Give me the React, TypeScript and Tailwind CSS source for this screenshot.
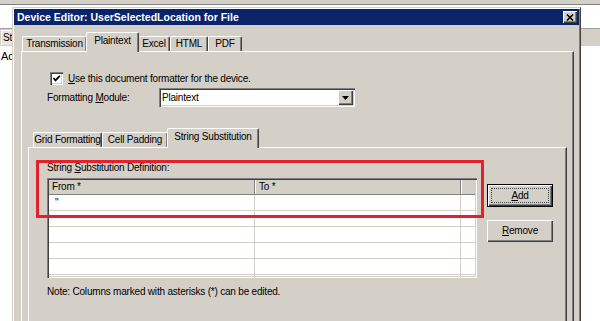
import React from "react";

const raised =
  "shadow-[inset_1px_1px_#ffffff,inset_-1px_-1px_#404040,inset_-2px_-2px_#808080]";
const sunken =
  "shadow-[inset_1px_1px_#808080,inset_2px_2px_#404040,inset_-1px_-1px_#ffffff,inset_-2px_-2px_#d4d0c8]";

function Tab({
  label,
  w,
  active,
}: {
  label: React.ReactNode;
  w: string;
  active?: boolean;
}) {
  return (
    <div
      className={`${w} ${
        active ? "h-[20px] -mx-[1px] z-10" : "h-[15px] mb-[1px]"
      } flex items-center justify-center bg-[#d4d0c8] border-t border-l border-white border-r border-r-[#404040] rounded-t-[2px] shadow-[inset_-1px_0_#808080] whitespace-nowrap`}
    >
      <span className={active ? "-mt-[3px]" : ""}>{label}</span>
    </div>
  );
}

function U({ children }: { children: React.ReactNode }) {
  return <span className="underline underline-offset-[1px]">{children}</span>;
}

export default function App() {
  const rows = [0, 1, 2, 3, 4, 5];

  return (
    <div className="relative w-[600px] h-[321px] overflow-hidden bg-white font-['Liberation_Sans',Arial,sans-serif] text-[10px] leading-[12px] tracking-[-0.2px] text-black">
      {/* application window behind the dialog */}
      <div className="h-[5px] bg-[#d4d0c8] border-b border-[#808080]" />
      <div className="h-[23px] bg-white" />
      <div className="h-[18px] bg-[#d4d0c8] border-t border-[#a0a0a0] flex items-center">
        <div className="ml-[1px] h-[15px] px-[1px] bg-[#e8e6e0] border-l border-t border-white flex items-center">
          Status
        </div>
      </div>
      <div className="pl-[1px] pt-[4px] text-[11px]">Address</div>

      {/* dialog */}
      <div className="absolute left-[12px] top-[7px] w-[569px] h-[330px] flex flex-col bg-[#d4d0c8] border border-[#d4d0c8] border-r-[#404040] border-b-[#404040] shadow-[inset_1px_1px_#ffffff,inset_-1px_-1px_#808080] p-[1px]">
        <div className="h-[16px] flex items-center justify-between bg-[#0a246a] pl-[3px] pr-[2px]">
          <span className="text-white font-bold text-[10.5px] tracking-[0px]">
            Device Editor: UserSelectedLocation for File
          </span>
          <div
            className={`w-[14px] h-[12px] bg-[#d4d0c8] ${raised} flex items-center justify-center`}
          >
            <svg width="8" height="7" viewBox="0 0 8 7">
              <path d="M1 0.5 L7 6.5 M7 0.5 L1 6.5" stroke="#000" strokeWidth="1.6" />
            </svg>
          </div>
        </div>

        <div className="flex-1 flex flex-col pl-[7px] pr-[5px]">
          {/* main tabs */}
          <div className="relative z-10 mt-[7px] h-[20px] flex items-end pl-[1px] -mb-[1px]">
            <Tab label="Transmission" w="w-[65px]" />
            <Tab label="Plaintext" w="w-[53px]" active />
            <Tab label="Excel" w="w-[32px]" />
            <Tab label="HTML" w="w-[38px]" />
            <Tab label="PDF" w="w-[34px]" />
          </div>

          <div className="flex-1 flex flex-col border-l border-t border-white border-r border-r-[#404040] shadow-[inset_-1px_0_#808080] pl-[6px] pr-[6px] pt-[20px]">
            <div className="ml-[22px] flex items-center h-[13px] gap-[5px]">
              <div className={`w-[13px] h-[13px] bg-white ${sunken} flex items-center justify-center`}>
                <svg width="9" height="9" viewBox="0 0 9 9">
                  <path d="M1.5 4 L3.5 6.3 L7.8 1.8" stroke="#000" strokeWidth="1.8" fill="none" />
                </svg>
              </div>
              <span>
                <U>U</U>se this document formatter for the device.
              </span>
            </div>

            <div className="ml-[19px] mt-[3px] flex items-center">
              <span className="w-[112px]">
                Formatting <U>M</U>odule:
              </span>
              <div className={`w-[196px] h-[19px] bg-white ${sunken} flex items-center pl-[3px] pr-[2px]`}>
                <span className="flex-1">Plaintext</span>
                <div className={`w-[15px] h-[15px] bg-[#d4d0c8] ${raised} flex items-center justify-center`}>
                  <svg width="7" height="4" viewBox="0 0 7 4">
                    <path d="M0 0 H7 L3.5 4 Z" fill="#000" />
                  </svg>
                </div>
              </div>
            </div>

            {/* inner tabs */}
            <div className="relative z-10 mt-[21px] h-[20px] flex items-end pl-[5px] -mb-[1px]">
              <Tab label="Grid Formatting" w="w-[69px]" />
              <Tab label="Cell Padding" w="w-[66px]" />
              <Tab label="String Substitution" w="w-[92px]" active />
            </div>

            <div className="relative flex-1 border-l border-t border-white border-r border-r-[#404040] shadow-[inset_-1px_0_#808080] pl-[18px] pt-[14px]">
              <div className="h-[12px]">
                String <U>S</U>ubstitution Definition:
              </div>

              <div className="mt-[4px] flex items-start">
                <div className={`w-[430px] h-[100px] bg-white ${sunken} p-[2px] overflow-hidden`}>
                  <div className="h-[15px] flex bg-[#d4d0c8] border-b border-[#808080]">
                    <div className="w-[206px] pl-[3px] flex items-center border-r border-[#808080]">
                      From *
                    </div>
                    <div className="w-[206px] pl-[3px] flex items-center border-l border-white border-r border-r-[#808080]">
                      To *
                    </div>
                    <div className="flex-1 border-l border-white" />
                  </div>
                  {rows.map((r) => (
                    <div key={r} className="h-[16px] flex border-b border-[#d4d0c8]">
                      <div className="w-[206px] pl-[6px] flex items-center border-r border-[#d4d0c8]">
                        {r === 0 ? '"' : ""}
                      </div>
                      <div className="w-[206px] border-r border-[#d4d0c8]" />
                      <div className="flex-1" />
                    </div>
                  ))}
                </div>

                <div className="ml-[10px] mt-[6px] flex flex-col">
                  <div className="w-[66px] h-[23px] border border-black">
                    <div className={`w-full h-full ${raised} p-[3px]`}>
                      <div className="w-full h-full border border-dotted border-[#404040] flex items-center justify-center">
                        <span>
                          <U>A</U>dd
                        </span>
                      </div>
                    </div>
                  </div>
                  <div className={`mt-[13px] w-[66px] h-[22px] ${raised} flex items-center justify-center`}>
                    <span>
                      <U>R</U>emove
                    </span>
                  </div>
                </div>
              </div>

              <div className="mt-[8px] h-[12px]">
                Note: Columns marked with asterisks (*) can be edited.
              </div>

              {/* annotation */}
              <div className="absolute left-[7px] top-[12px] w-[448px] h-[58px] border-[3px] border-[#e4202a]" />
            </div>
          </div>
        </div>
      </div>
    </div>
  );
}
